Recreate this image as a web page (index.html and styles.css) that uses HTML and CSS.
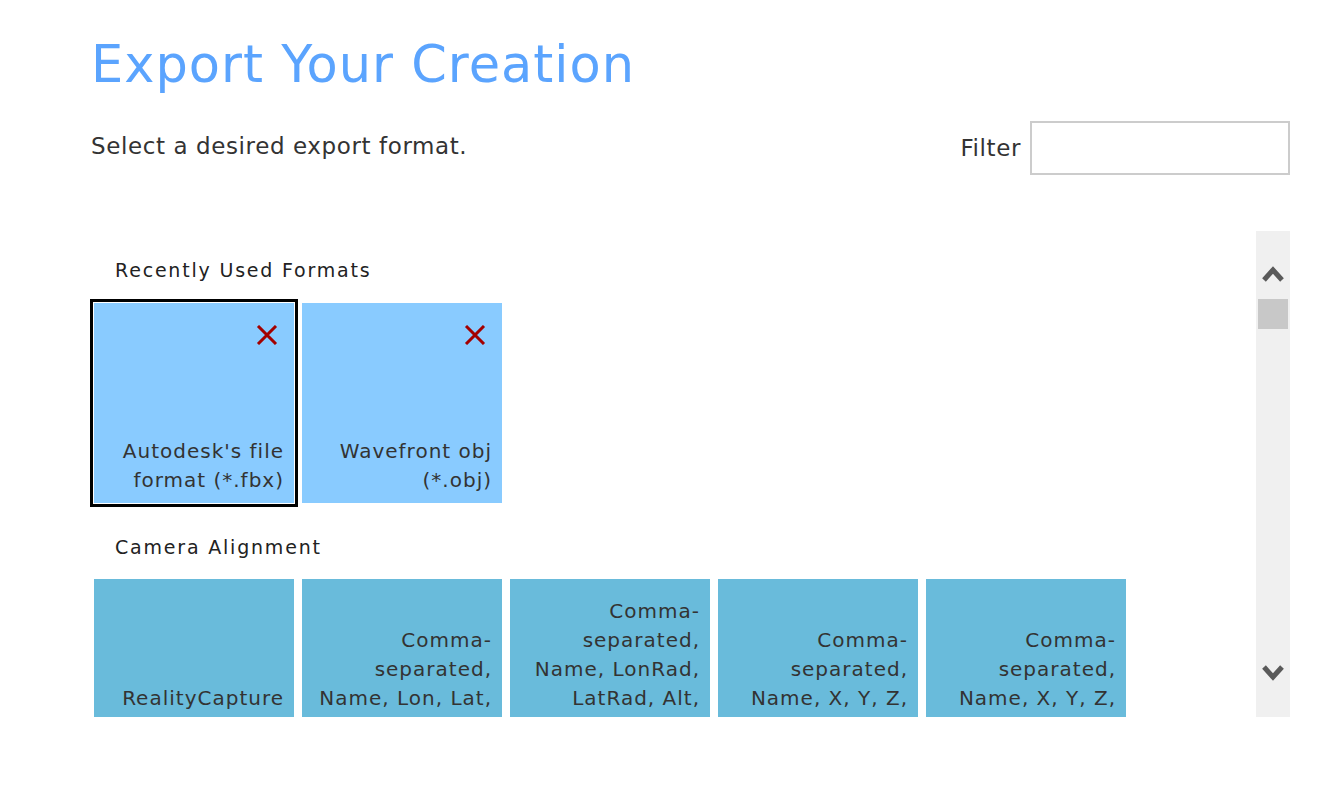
FILE: index.html
```html
<!DOCTYPE html>
<html lang="en">
<head>
<meta charset="utf-8">
<title>Export Your Creation</title>
<link rel="stylesheet" href="styles.css">
</head>
<body>
<main class="page">
  <h1 class="title">Export Your Creation</h1>
  <div class="toolbar">
    <p class="subtitle">Select a desired export format.</p>
    <label class="filter">
      <span class="filter-label">Filter</span>
      <input class="filter-input" type="text">
    </label>
  </div>
  <div class="browser">
    <div class="list">
      <section class="group">
        <h2 class="group-title">Recently Used Formats</h2>
        <div class="tiles">
          <div class="tile recent selected">
            <svg class="remove" width="22" height="20" viewBox="0 0 22 20"><path d="M2 1 L20 19 M20 1 L2 19" stroke="#a30000" stroke-width="3" fill="none"/></svg>
            <span class="tile-text">Autodesk's file format (*.fbx)</span>
          </div>
          <div class="tile recent">
            <svg class="remove" width="22" height="20" viewBox="0 0 22 20"><path d="M2 1 L20 19 M20 1 L2 19" stroke="#a30000" stroke-width="3" fill="none"/></svg>
            <span class="tile-text">Wavefront obj (*.obj)</span>
          </div>
        </div>
      </section>
      <section class="group">
        <h2 class="group-title">Camera Alignment</h2>
        <div class="tiles">
          <div class="tile camera"><span class="tile-text">RealityCapture Registration (*.rcalign)</span></div>
          <div class="tile camera"><span class="tile-text">Comma-separated, Name, Lon, Lat, Alt, Yaw, Pitch, Roll (*.csv)</span></div>
          <div class="tile camera"><span class="tile-text">Comma-separated, Name, LonRad, LatRad, Alt, Heading, Pitch, Roll (*.csv)</span></div>
          <div class="tile camera"><span class="tile-text">Comma-separated, Name, X, Y, Z, Heading, Pitch, Roll (*.csv)</span></div>
          <div class="tile camera"><span class="tile-text">Comma-separated, Name, X, Y, Z, Omega, Phi, Kappa (*.csv)</span></div>
        </div>
      </section>
    </div>
    <div class="scrollbar">
      <svg class="arrow" width="22" height="18" viewBox="0 0 22 18"><path d="M2 15 L11 5 L20 15" stroke="#5a5a5a" stroke-width="5" fill="none"/></svg>
      <div class="thumb"></div>
      <div class="track"></div>
      <svg class="arrow" width="22" height="18" viewBox="0 0 22 18"><path d="M2 2 L11 12 L20 2" stroke="#5a5a5a" stroke-width="5" fill="none"/></svg>
    </div>
  </div>
</main>
</body>
</html>
```

FILE: styles.css
```css
html, body {
  margin: 0;
  padding: 0;
  background: #ffffff;
}

body {
  font-family: "DejaVu Sans", "Liberation Sans", sans-serif;
  color: #333333;
}

.page {
  padding: 34px 34px 0 90px;
}

.title {
  margin: 0 0 0 1px;
  font-weight: normal;
  font-size: 51px;
  line-height: 61px;
  letter-spacing: 1px;
  color: #5ba4fe;
}

.toolbar {
  margin-top: 26px;
  display: flex;
  justify-content: space-between;
  align-items: flex-start;
}

.subtitle {
  margin: 12px 0 0 1px;
  font-size: 23px;
  line-height: 27px;
  letter-spacing: 0.6px;
}

.filter {
  display: flex;
  align-items: center;
  gap: 9px;
}

.filter-label {
  font-size: 23px;
  letter-spacing: 0.6px;
}

.filter-input {
  box-sizing: border-box;
  width: 260px;
  height: 54px;
  border: 2px solid #cccccc;
  margin: 0;
  padding: 0 8px;
  outline: none;
  font: inherit;
}

.browser {
  margin-top: 56px;
  height: 486px;
  display: flex;
}

.list {
  flex: 1;
  overflow: hidden;
  padding-top: 27px;
}

.group-title {
  margin: 0 0 17px 25px;
  font-weight: normal;
  font-size: 19px;
  line-height: 24px;
  letter-spacing: 1.8px;
  color: #222222;
}

.group + .group .group-title {
  margin-top: 28px;
  margin-bottom: 16px;
}

.tiles {
  display: flex;
  flex-wrap: wrap;
}

.tile {
  box-sizing: border-box;
  position: relative;
  width: 200px;
  height: 200px;
  margin: 4px;
  padding: 0 10px 8px 10px;
  display: flex;
  flex-direction: column;
  justify-content: flex-end;
  text-align: right;
  font-size: 20px;
  line-height: 29px;
  letter-spacing: 1px;
  color: #333333;
}

.tile.recent {
  background: #89cbff;
}

.tile.camera {
  background: #69bbdb;
}

.tile.selected {
  outline: 3px solid #000000;
  outline-offset: 1px;
}

.remove {
  position: absolute;
  top: 22px;
  right: 16px;
}

.scrollbar {
  width: 34px;
  background: #f0f0f0;
  display: flex;
  flex-direction: column;
  align-items: center;
}

.scrollbar .arrow {
  flex: none;
}

.scrollbar .arrow:first-child {
  margin-top: 34px;
}

.scrollbar .arrow:last-child {
  margin-bottom: 34px;
}

.thumb {
  width: 30px;
  height: 30px;
  margin-top: 16px;
  background: #c8c8c8;
}

.track {
  flex: 1;
}
```
